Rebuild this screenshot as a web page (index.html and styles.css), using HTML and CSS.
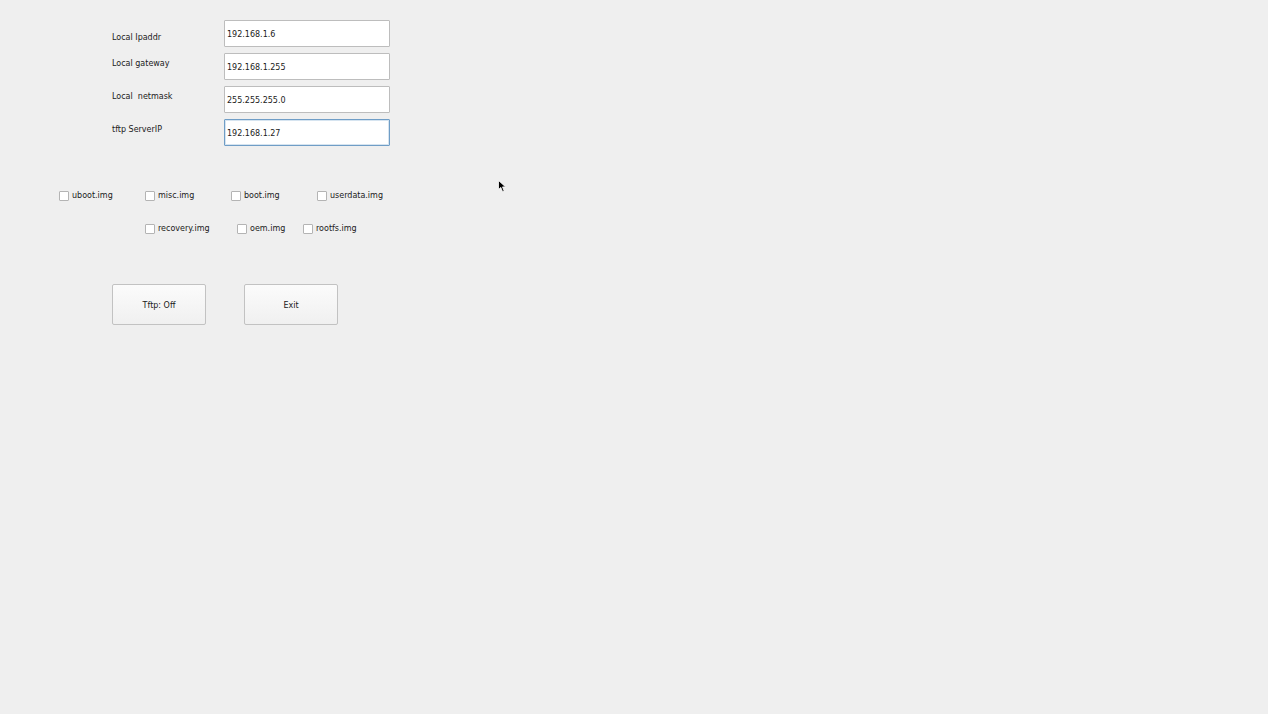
FILE: index.html
```html
<!DOCTYPE html>
<html lang="en">
<head>
    <meta charset="UTF-8">
    <title>Tftp Tool</title>
    <link rel="stylesheet" href="styles.css">
</head>
<body>
    <div class="window">
        <div class="net-form">
            <div class="field-row">
                <div class="field-label first">Local Ipaddr</div>
                <div class="field-box">192.168.1.6</div>
            </div>
            <div class="field-row">
                <div class="field-label">Local gateway</div>
                <div class="field-box">192.168.1.255</div>
            </div>
            <div class="field-row">
                <div class="field-label">Local&nbsp; netmask</div>
                <div class="field-box">255.255.255.0</div>
            </div>
            <div class="field-row">
                <div class="field-label">tftp ServerIP</div>
                <div class="field-box focused">192.168.1.27</div>
            </div>
        </div>

        <div class="img-list">
            <div class="img-row top">
                <label class="check"><span class="box"></span>uboot.img</label>
                <label class="check"><span class="box"></span>misc.img</label>
                <label class="check"><span class="box"></span>boot.img</label>
                <label class="check"><span class="box"></span>userdata.img</label>
            </div>
            <div class="img-row bottom">
                <label class="check w92"><span class="box"></span>recovery.img</label>
                <label class="check w66"><span class="box"></span>oem.img</label>
                <label class="check"><span class="box"></span>rootfs.img</label>
            </div>
        </div>

        <div class="actions">
            <div class="push-btn">Tftp: Off</div>
            <div class="push-btn">Exit</div>
        </div>

        <!-- mouse pointer left in the screenshot -->
        <svg class="pointer" width="9" height="13" viewBox="0 0 9 13">
            <path d="M0.5 0.5 L0.5 9.5 L2.8 7.4 L4.6 11.8 L6.2 11.1 L4.5 6.9 L7.6 6.9 Z" fill="#000" stroke="#fff" stroke-width="0.8"/>
        </svg>
    </div>
</body>
</html>
```

FILE: styles.css
```css
html, body {
    margin: 0;
    padding: 0;
    background: #efefef;
}

body {
    font-family: "DejaVu Sans", sans-serif;
    font-size: 8px;
    color: #1a1a1a;
}

.window {
    position: relative;
    width: 1268px;
    height: 714px;
}

.net-form {
    display: flex;
    flex-direction: column;
    gap: 6px;
    padding: 20px 0 0 112px;
}

.field-row {
    display: flex;
    height: 27px;
}

.field-label {
    width: 112px;
    padding-top: 6px;
    line-height: 10px;
}

.field-label.first {
    padding-top: 13px;
}

.field-box {
    width: 162px;
    height: 25px;
    line-height: 27px;
    padding-left: 2px;
    box-sizing: content-box;
    background: #fff;
    border: 1px solid #bdbdbd;
    border-radius: 1px;
}

.field-box.focused {
    border-color: #6f9dc6;
    box-shadow: inset 0 0 0 1px #d6e4f0;
}

.img-list {
    margin-top: 44px;
    padding-left: 59px;
}

.img-row {
    display: flex;
    height: 12px;
    align-items: center;
}

.img-row.bottom {
    margin-top: 21px;
    padding-left: 86px;
}

.img-row.top .check {
    width: 86px;
}

.check {
    display: flex;
    align-items: center;
    line-height: 12px;
    white-space: nowrap;
}

.check.w92 {
    width: 92px;
}

.check.w66 {
    width: 66px;
}

.box {
    width: 8px;
    height: 8px;
    margin-right: 3px;
    background: #fff;
    border: 1px solid #b4b4b4;
    border-radius: 1px;
}

.actions {
    display: flex;
    gap: 38px;
    margin-top: 49px;
    padding-left: 112px;
}

.push-btn {
    width: 92px;
    height: 39px;
    line-height: 41px;
    text-align: center;
    border: 1px solid #c2c2c2;
    border-radius: 2px;
    background: linear-gradient(#fbfbfb, #f0f0f0);
}

.pointer {
    position: absolute;
    left: 498px;
    top: 180px;
}
```
